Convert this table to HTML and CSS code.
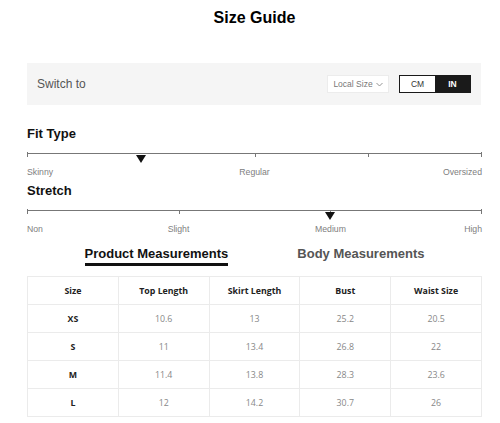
FILE: index.html
```html
<!DOCTYPE html>
<html>
<head>
<meta charset="utf-8">
<link rel="stylesheet" href="styles.css">
</head>
<body>
<div class="page">
  <h1 class="title">Size Guide</h1>

  <div class="switchbar">
    <span class="switch-label">Switch to</span>
    <div class="switch-controls">
      <div class="select">Local Size <svg class="chev" width="7" height="5" viewBox="0 0 7 5"><path d="M0.5 1 L3.5 4 L6.5 1" fill="none" stroke="#888" stroke-width="0.9"/></svg></div>
      <div class="toggle">
        <span class="opt">CM</span>
        <span class="opt active">IN</span>
      </div>
    </div>
  </div>

  <div class="scale">
    <h2 class="scale-title">Fit Type</h2>
    <div class="track">
      <span class="tick end-l" style="left:0%"></span>
      <span class="tick" style="left:50%"></span>
      <span class="tick" style="left:75%"></span>
      <span class="tick end-r" style="left:100%"></span>
      <span class="marker" style="left:25%"></span>
    </div>
    <div class="labels">
      <span class="lbl start" style="left:0%">Skinny</span>
      <span class="lbl" style="left:50%">Regular</span>
      <span class="lbl end" style="left:100%">Oversized</span>
    </div>
  </div>

  <div class="scale">
    <h2 class="scale-title">Stretch</h2>
    <div class="track">
      <span class="tick end-l" style="left:0%"></span>
      <span class="tick" style="left:33.3%"></span>
      <span class="tick" style="left:66.7%"></span>
      <span class="tick end-r" style="left:100%"></span>
      <span class="marker" style="left:66.7%"></span>
    </div>
    <div class="labels">
      <span class="lbl start" style="left:0%">Non</span>
      <span class="lbl" style="left:33.3%">Slight</span>
      <span class="lbl" style="left:66.7%">Medium</span>
      <span class="lbl end" style="left:100%">High</span>
    </div>
  </div>

  <div class="tabs">
    <span class="tab active">Product Measurements</span>
    <span class="tab">Body Measurements</span>
  </div>

  <table class="sizes">
    <thead>
      <tr><th>Size</th><th>Top Length</th><th>Skirt Length</th><th>Bust</th><th>Waist Size</th></tr>
    </thead>
    <tbody>
      <tr><th>XS</th><td>10.6</td><td>13</td><td>25.2</td><td>20.5</td></tr>
      <tr><th>S</th><td>11</td><td>13.4</td><td>26.8</td><td>22</td></tr>
      <tr><th>M</th><td>11.4</td><td>13.8</td><td>28.3</td><td>23.6</td></tr>
      <tr><th>L</th><td>12</td><td>14.2</td><td>30.7</td><td>26</td></tr>
    </tbody>
  </table>
</div>
</body>
</html>
```

FILE: styles.css
```css
* { box-sizing: border-box; }
html, body { margin: 0; padding: 0; background: #fff; }
body { font-family: "Liberation Sans", Arial, sans-serif; color: #111; }

.page {
  width: 500px;
  padding: 8px 18px 0 27px;
}

.title {
  margin: 0;
  height: 20px;
  line-height: 20px;
  font-size: 16px;
  font-weight: bold;
  text-align: center;
  color: #000;
}

.switchbar {
  margin-top: 35px;
  height: 42px;
  width: 454px;
  background: #f5f5f5;
  display: flex;
  align-items: center;
  justify-content: space-between;
  padding: 0 10px;
}
.switch-label { font-size: 12px; color: #555; }
.switch-controls { display: flex; align-items: center; gap: 10px; }
.select {
  width: 62px;
  height: 18px;
  background: #fff;
  border: 1px solid #ececec;
  font-size: 8.5px;
  color: #777;
  display: flex;
  align-items: center;
  justify-content: center;
  gap: 3px;
}
.chev { display: block; margin-top: 1px; }
.toggle {
  display: flex;
  height: 18px;
  border: 1px solid #1a1a1a;
  margin-top: -1px;
}
.opt {
  width: 35px;
  display: flex;
  align-items: center;
  justify-content: center;
  font-size: 8.5px;
  color: #333;
  background: #fff;
}
.opt.active { background: #1a1a1a; color: #fff; font-weight: bold; }

.scale { width: 455px; }
.scale-title {
  margin: 0;
  height: 18px;
  line-height: 18px;
  font-size: 13px;
  font-weight: bold;
  color: #111;
}
.switchbar + .scale { margin-top: 20px; }
.scale + .scale { margin-top: 3px; }

.track {
  position: relative;
  margin-top: 10px;
  height: 12px;
  border-top: 1px solid #777;
}
.tick {
  position: absolute;
  top: -1px;
  width: 1px;
  height: 4px;
  background: #777;
}
.tick.end-l { top: -2px; height: 5px; }
.tick.end-r { top: -2px; height: 5px; margin-left: -1px; }
.marker {
  position: absolute;
  top: 1px;
  margin-left: -5px;
  width: 0;
  height: 0;
  border-left: 5px solid transparent;
  border-right: 5px solid transparent;
  border-top: 8px solid #111;
}
.labels {
  position: relative;
  height: 14px;
}
.lbl {
  position: absolute;
  top: 0;
  line-height: 14px;
  font-size: 8.7px;
  color: #808080;
  white-space: nowrap;
  transform: translateX(-50%);
}
.lbl.start { transform: none; }
.lbl.end { transform: translateX(-100%); }

.tabs {
  width: 455px;
  margin-top: 10px;
  display: flex;
  justify-content: center;
  gap: 69px;
}
.tab {
  font-size: 13px;
  font-weight: bold;
  line-height: 16px;
  color: #555;
  padding-bottom: 1px;
  border-bottom: 3px solid transparent;
}
.tab.active { color: #111; border-bottom-color: #111; }

.sizes {
  margin-top: 10px;
  width: 455px;
  border-collapse: collapse;
  table-layout: fixed;
  font-family: "Open Sans", "Liberation Sans", sans-serif;
}
.sizes th, .sizes td {
  height: 28px;
  border: 1px solid #ebebeb;
  text-align: center;
  font-size: 8.8px;
  padding: 0;
}
.sizes th { font-weight: 700; color: #222; }
.sizes td { color: #888; }
```
